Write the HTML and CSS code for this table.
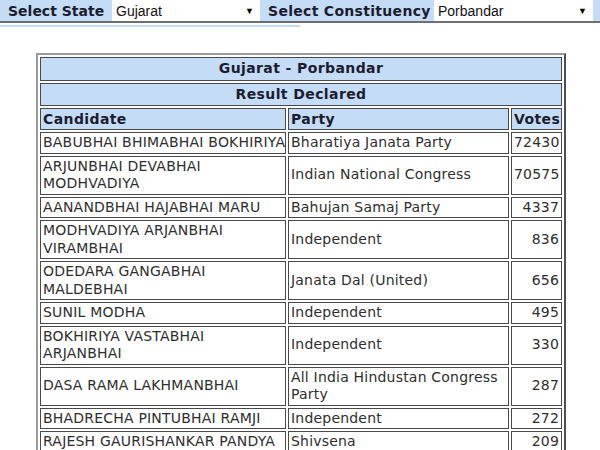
FILE: index.html
```
<!DOCTYPE html>
<html>
<head>
<meta charset="utf-8">
<link rel="stylesheet" href="styles.css">
</head>
<body>
<div class="bar">
  <span class="lbl">Select State</span>
  <div class="sel sel-state"><span>Gujarat</span><span class="arr">▼</span></div>
  <span class="lbl lbl2">Select Constituency</span>
  <div class="sel sel-cons"><span>Porbandar</span><span class="arr">▼</span></div>
</div>
<div class="underline"></div>
<table class="res">
  <colgroup><col class="c1"><col class="c2"><col class="c3"></colgroup>
  <tr><th colspan="3" class="center">Gujarat - Porbandar</th></tr>
  <tr><th colspan="3" class="center">Result Declared</th></tr>
  <tr><th>Candidate</th><th>Party</th><th>Votes</th></tr>
  <tr><td>BABUBHAI BHIMABHAI BOKHIRIYA</td><td>Bharatiya Janata Party</td><td class="num">72430</td></tr>
  <tr><td>ARJUNBHAI DEVABHAI<br>MODHVADIYA</td><td>Indian National Congress</td><td class="num">70575</td></tr>
  <tr><td>AANANDBHAI HAJABHAI MARU</td><td>Bahujan Samaj Party</td><td class="num">4337</td></tr>
  <tr><td>MODHVADIYA ARJANBHAI<br>VIRAMBHAI</td><td>Independent</td><td class="num">836</td></tr>
  <tr><td>ODEDARA GANGABHAI<br>MALDEBHAI</td><td>Janata Dal (United)</td><td class="num">656</td></tr>
  <tr><td>SUNIL MODHA</td><td>Independent</td><td class="num">495</td></tr>
  <tr><td>BOKHIRIYA VASTABHAI<br>ARJANBHAI</td><td>Independent</td><td class="num">330</td></tr>
  <tr><td>DASA RAMA LAKHMANBHAI</td><td>All India Hindustan Congress<br>Party</td><td class="num">287</td></tr>
  <tr><td>BHADRECHA PINTUBHAI RAMJI</td><td>Independent</td><td class="num">272</td></tr>
  <tr><td>RAJESH GAURISHANKAR PANDYA</td><td>Shivsena</td><td class="num">209</td></tr>
</table>
</body>
</html>
```
FILE: styles.css
```
html, body {
  margin: 0;
  padding: 0;
  background: #ffffff;
  font-family: "DejaVu Sans", Verdana, sans-serif;
  color: #2e2e2e;
}
.bar {
  display: flex;
  align-items: center;
  height: 21px;
  background: #c5dcf7;
  border-bottom: 2px solid #6e6e6e;
}
.lbl {
  font-weight: bold;
  font-size: 14px;
  color: #1c1c2e;
  padding-left: 8px;
  width: 104px;
  box-sizing: border-box;
  white-space: nowrap;
}
.lbl2 {
  width: 174px;
  padding-left: 8px;
  letter-spacing: 0.3px;
}
.sel {
  height: 21px;
  background: #fff;
  display: flex;
  align-items: center;
  justify-content: space-between;
  font-family: "Liberation Sans", Arial, sans-serif;
  font-size: 14px;
  color: #111;
  padding: 0 6px 0 4px;
  box-sizing: border-box;
}
.sel-state { width: 148px; margin-left: 8px; }
.sel-cons { width: 159px; }
.arr { font-size: 9px; color: #000; }
.underline {
  width: 300px;
  height: 2px;
  margin-top: 2px;
  background: #c5dcf7;
}
.res {
  margin: 26px 0 0 36px;
  border-collapse: separate;
  border-spacing: 2px;
  border: 2px solid;
  border-color: #9a9a9a #505050 #505050 #9a9a9a;
  font-size: 14px;
  letter-spacing: 0.2px;
  table-layout: fixed;
  width: 530px;
}
.c1 { width: 246px; }
.c2 { width: 221px; }
.c3 { width: 51px; }
.res th, .res td {
  border: 1px solid #4a4a4a;
  padding: 1px 2px;
  line-height: 17.5px;
}
.res th {
  background: #c5dcf7;
  font-size: 14px;
  letter-spacing: 0.4px;
  text-align: left;
  color: #1c1c2e;
  line-height: 18px;
}
.res th.center { text-align: center; padding: 2px; line-height: 17.5px; }
.res td { background: #fff; vertical-align: middle; white-space: nowrap; }
.res td.num { text-align: right; }
```
